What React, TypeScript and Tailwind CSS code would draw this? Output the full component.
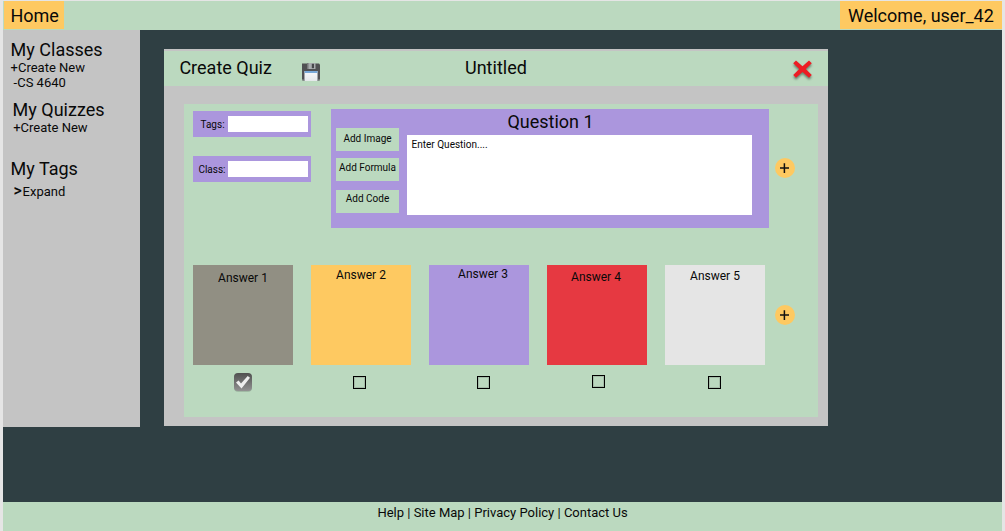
import React from "react";

function SaveIcon() {
  return (
    <svg width="18" height="18" viewBox="0 0 18 18" className="block">
      <defs>
        <linearGradient id="sheet" x1="0" y1="0" x2="0" y2="1">
          <stop offset="0" stopColor="#f7f9fb" />
          <stop offset="1" stopColor="#e4e8ea" />
        </linearGradient>
      </defs>
      <path d="M0 0.5H17L18 1.5V18H0Z" fill="#505153" />
      <rect x="5" y="0" width="8.5" height="6" fill="#a9adaf" />
      <rect x="5" y="0" width="1.5" height="6" fill="#77797a" />
      <rect x="9.8" y="0.8" width="2.2" height="4.4" fill="#45474a" />
      <rect x="2" y="8" width="14" height="10" fill="#707579" />
      <rect x="2.6" y="8" width="12.8" height="10" fill="url(#sheet)" />
      <rect x="2.6" y="8" width="12.8" height="2" fill="#78a9d8" />
      <rect x="0.2" y="16.5" width="1.4" height="1.5" fill="#a5b5aa" />
      <rect x="16.4" y="16.5" width="1.4" height="1.5" fill="#a5b5aa" />
    </svg>
  );
}

function CloseIcon() {
  return (
    <svg width="22" height="24" viewBox="0 0 22 24" className="block overflow-visible">
      <path
        d="M4 2.5 10.5 8.3 17 2.5 19.8 5.2 13.8 11 19.8 17 17 19.8 10.5 13.9 4 19.8 1.2 17 7.2 11 1.2 5.2Z"
        fill="#ed1c24"
        className="[filter:drop-shadow(0.5px_2px_1.2px_rgba(40,60,45,0.55))]"
      />
    </svg>
  );
}

function CheckedIcon() {
  return (
    <svg width="18" height="19" viewBox="0 0 18 19" className="block">
      <defs>
        <linearGradient id="tile" x1="0" y1="0" x2="0" y2="1">
          <stop offset="0" stopColor="#505050" />
          <stop offset="1" stopColor="#929292" />
        </linearGradient>
      </defs>
      <rect x="0" y="0.7" width="18" height="18" rx="4" fill="#75877a" opacity="0.5" />
      <rect x="0" y="0" width="18" height="18" rx="4" fill="url(#tile)" />
      <path d="M2 9.5 4.6 7.6 7 10.6 13.7 3 16 4.8 7.5 15.6Z" fill="#eeeeee" />
    </svg>
  );
}

function AddButton() {
  return (
    <button className="flex size-5 items-center justify-center rounded-full bg-[#fec961]">
      <svg width="20" height="20" viewBox="0 0 20 20">
        <path d="M5 10.1H14M9.4 5.3V14.9" stroke="#111" strokeWidth="1.5" />
      </svg>
    </button>
  );
}

function Field({ label, pad }: { label: string; pad: string }) {
  return (
    <label className={`flex h-[26px] w-[118px] items-center bg-[#ab96dd] ${pad}`}>
      <span className="flex-1 pt-[2px] text-[10px] leading-3 whitespace-nowrap">{label}</span>
      <input className="mr-[3px] h-4 w-20 bg-white outline-none" />
    </label>
  );
}

const answers = [
  { name: "Answer 1", box: "bg-[#918f83] pt-[6px]", check: "pt-2" },
  { name: "Answer 2", box: "bg-[#fec961] pt-[3px]", check: "pt-[11px] pr-[3px]" },
  { name: "Answer 3", box: "bg-[#ab96dd] pt-[2px] pl-[8px]", check: "pt-[11px] pl-[9px]" },
  { name: "Answer 4", box: "bg-[#e63941] pt-[5px] pr-[2px]", check: "pt-[10px] pl-[3px]" },
  { name: "Answer 5", box: "bg-[#e5e5e5] pt-1", check: "pt-[11px] pr-[1px]" },
];

function Sidebar() {
  return (
    <nav className="h-[397px] w-[137px] bg-[#c4c4c4] pt-[9px] pl-[7.6px]">
      <h2 className="text-lg leading-[21px]">My Classes</h2>
      <p className="text-[13px] leading-[15px]">+Create New</p>
      <p className="pl-[3px] text-[13px] leading-[15px]">-CS 4640</p>
      <h2 className="mt-[9px] pl-[2px] text-lg leading-[21px]">My Quizzes</h2>
      <p className="pl-[2.6px] text-[13px] leading-[15px]">+Create New</p>
      <h2 className="mt-[23px] text-lg leading-[21px]">My Tags</h2>
      <p className="mt-1 flex h-[15px] items-baseline pl-[3px] text-[13px] leading-[15px]">
        <span className="w-[9px] text-base leading-[15px] font-medium">&gt;</span>
        <span>Expand</span>
      </p>
    </nav>
  );
}

export default function App() {
  return (
    <div className="h-[531px] w-[1005px] overflow-hidden bg-[#e5e5e5] px-[3px] pt-px font-['Roboto',sans-serif] text-[#090909]">
      <div className="flex h-[530px] flex-col bg-[#2f3f43]">
        <header className="flex h-[29px] justify-between bg-[#bbd9bf] pl-px text-lg leading-[21px]">
          <div className="h-7 w-[60px] bg-[#fec961] pt-1 pl-[6.4px]">Home</div>
          <div className="h-7 w-[162px] bg-[#fec961] pt-1 pl-2 whitespace-nowrap">Welcome, user_42</div>
        </header>
        <div className="flex flex-1 items-start">
          <Sidebar />
          <main className="mt-[19px] ml-6 h-[377px] w-[664px] bg-[#c4c4c4] pt-[2px]">
            <div className="flex h-[35px] bg-[#bbd9bf] text-lg leading-[21px]">
              <h1 className="w-[138px] pt-[6px] pl-[15.4px]">Create Quiz</h1>
              <button className="mt-3 h-[18px] w-[18px] self-start"><SaveIcon /></button>
              <span className="flex-1 pt-[6px] pl-[145px]">Untitled</span>
              <button className="mt-[7px] mr-[14px] self-start"><CloseIcon /></button>
            </div>
            <div className="mt-[18px] ml-5 h-[313px] w-[634px] bg-[#bbd9bf] pt-[5px] pl-[9px]">
              <div className="flex h-[156px]">
                <div className="flex w-[138px] flex-col gap-[19px] pt-[2px]">
                  <Field label="Tags:" pad="pl-[7.5px]" />
                  <Field label="Class:" pad="pl-[5.4px]" />
                </div>
                <section className="flex h-[119px] w-[438px] bg-[#ab96dd] pl-[5px]">
                  <div className="flex w-[71px] flex-col pt-[19px] text-center text-[10px] leading-3">
                    <button className="h-[23px] w-[63px] bg-[#bbd9bf] pb-[2px]">Add Image</button>
                    <button className="mt-[7px] h-[23px] w-[63px] bg-[#bbd9bf] pb-[3px] whitespace-nowrap">Add Formula</button>
                    <button className="mt-[9px] h-[23px] w-[63px] bg-[#bbd9bf] pb-[5px]">Add Code</button>
                  </div>
                  <div className="w-[345px] pt-[2px]">
                    <h2 className="h-6 pl-[100.4px] text-lg leading-[21px]">Question 1</h2>
                    <div className="h-20 bg-white pt-1 pl-[4.6px] text-[10px] leading-3">Enter Question....</div>
                  </div>
                </section>
                <div className="pt-[49px] pl-[6px]"><AddButton /></div>
              </div>
              <div className="flex gap-[18px]">
                {answers.map((a, i) => (
                  <div key={a.name} className="w-[100px]">
                    <div className={`h-[100px] text-center text-xs leading-[14px] ${a.box}`}>{a.name}</div>
                    <div className={`flex justify-center ${a.check}`}>
                      {i === 0 ? <CheckedIcon /> : <span className="size-[13px] border border-black shadow-[inset_0_0_0_1px_#a5bca8]" />}
                    </div>
                  </div>
                ))}
                <div className="-ml-2 pt-10"><AddButton /></div>
              </div>
            </div>
          </main>
        </div>
        <footer className="h-[29px] bg-[#bbd9bf] pt-[3px] pl-[374.4px] text-[13px] leading-[15px]">
          Help | Site Map | Privacy Policy | Contact Us
        </footer>
      </div>
    </div>
  );
}
